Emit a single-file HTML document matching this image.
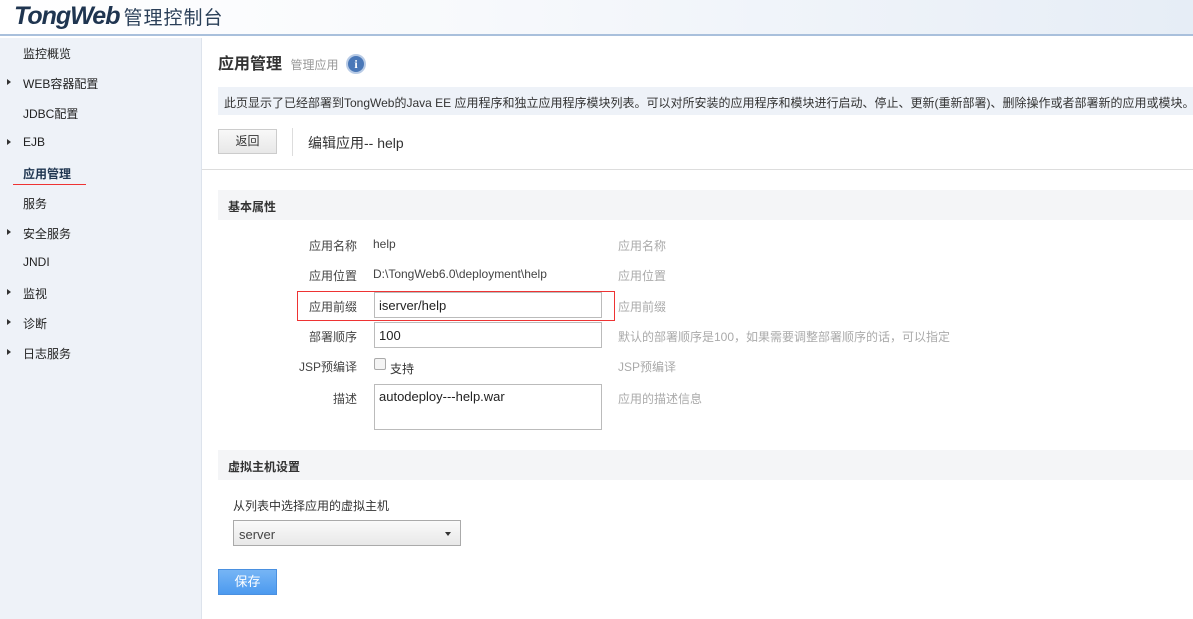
<!DOCTYPE html>
<html><head><meta charset="utf-8"><style>
*{margin:0;padding:0;box-sizing:border-box}
body{width:1193px;height:619px;overflow:hidden;font-family:"Liberation Sans","Noto Sans CJK SC",sans-serif;font-size:12px;color:#333;background:#fff;position:relative}
.hdr{position:absolute;left:0;top:0;width:1193px;height:36px;background:linear-gradient(90deg,#fff 0%,#f7f9fc 40%,#e6edf6 100%);border-bottom:2px solid #a9c0dc}
.logo{position:absolute;left:14px;top:2px;font:italic bold 25px "Liberation Sans",sans-serif;color:#1f3550;letter-spacing:-1px}
.logo span{font:normal 19px "Noto Sans CJK SC",sans-serif;color:#2a3f58;letter-spacing:1px;margin-left:4px}
.side{position:absolute;left:0;top:38px;width:202px;height:581px;background:#eef2f8;border-right:1px solid #dde3ec}
.side div{position:absolute;left:23px;font-size:12px;color:#222}
.side .a:before{content:"";position:absolute;left:-16px;top:4px;border-left:4px solid #333;border-top:3px solid transparent;border-bottom:3px solid transparent}
.abs{position:absolute}
.inp{position:absolute;border:1px solid #bbb;background:#fff;font-size:13px;color:#222;padding:5px 4px}
.lbl{position:absolute;right:836px;font-size:12px;color:#444}
.hint{position:absolute;left:618px;color:#aaa;font-size:12px}
</style></head><body>
<div class="hdr"><div class="logo">TongWeb<span>管理控制台</span></div></div>
<div class="side">
<div style="top:7px">监控概览</div>
<div class="a" style="top:37px">WEB容器配置</div>
<div style="top:67px">JDBC配置</div>
<div class="a" style="top:97px">EJB</div>
<div style="top:127px;font-weight:bold;color:#1f3550">应用管理</div>
<div style="left:13px;top:146px;width:73px;height:1px;background:#e33"></div>
<div style="top:157px">服务</div>
<div class="a" style="top:187px">安全服务</div>
<div style="top:217px">JNDI</div>
<div class="a" style="top:247px">监视</div>
<div class="a" style="top:277px">诊断</div>
<div class="a" style="top:307px">日志服务</div>
</div>
<div class="abs" style="left:218px;top:50px;font-size:16px;font-weight:bold;color:#333">应用管理 <span style="font-size:12px;font-weight:normal;color:#999;margin-left:4px">管理应用</span></div>
<div class="abs" style="left:346px;top:54px;width:20px;height:20px;border-radius:50%;background:#4a78b8;border:2px solid #b8cbe6;color:#fff;font:bold 12px serif;text-align:center;line-height:16px">i</div>
<div class="abs" style="left:218px;top:87px;width:975px;height:28px;background:#eef2f8;padding:7px 6px;font-size:12px;color:#333;white-space:nowrap;overflow:hidden">此页显示了已经部署到TongWeb的Java EE 应用程序和独立应用程序模块列表。可以对所安装的应用程序和模块进行启动、停止、更新(重新部署)、删除操作或者部署新的应用或模块。</div>
<div class="abs" style="left:218px;top:129px;width:59px;height:25px;border:1px solid #ccc;background:linear-gradient(#f8f8f8,#e8e8e8);text-align:center;line-height:23px;color:#333">返回</div>
<div class="abs" style="left:292px;top:128px;width:1px;height:28px;background:#ddd"></div>
<div class="abs" style="left:308px;top:133px;font-size:14px;color:#333">编辑应用-- help</div>
<div class="abs" style="left:202px;top:169px;width:991px;height:1px;background:#ddd"></div>
<div class="abs" style="left:218px;top:190px;width:975px;height:30px;background:#f4f5f7;padding:8px 10px;font-weight:bold;font-size:12px;color:#333">基本属性</div>
<div class="lbl" style="top:237px">应用名称</div><div class="abs" style="left:373px;top:237px;color:#444">help</div><div class="hint" style="top:237px">应用名称</div>
<div class="lbl" style="top:267px">应用位置</div><div class="abs" style="left:373px;top:267px;color:#444">D:\TongWeb6.0\deployment\help</div><div class="hint" style="top:267px">应用位置</div>
<div class="abs" style="left:297px;top:291px;width:318px;height:30px;border:1px solid #e33"></div>
<div class="lbl" style="top:298px">应用前缀</div><div class="inp" style="left:374px;top:292px;width:228px;height:26px">iserver/help</div><div class="hint" style="top:298px">应用前缀</div>
<div class="lbl" style="top:328px">部署顺序</div><div class="inp" style="left:374px;top:322px;width:228px;height:26px">100</div><div class="hint" style="top:328px">默认的部署顺序是100，如果需要调整部署顺序的话，可以指定</div>
<div class="lbl" style="top:358px">JSP预编译</div><div class="abs" style="left:374px;top:358px;width:12px;height:12px;border:1px solid #aaa;border-radius:2px;background:#f4f4f4"></div><div class="abs" style="left:390px;top:360px;color:#333">支持</div><div class="hint" style="top:358px">JSP预编译</div>
<div class="lbl" style="top:390px">描述</div><div class="inp" style="left:374px;top:384px;width:228px;height:46px;padding-top:4px">autodeploy---help.war</div><div class="hint" style="top:390px">应用的描述信息</div>
<div class="abs" style="left:218px;top:450px;width:975px;height:30px;background:#f4f5f7;padding:8px 10px;font-weight:bold;font-size:12px;color:#333">虚拟主机设置</div>
<div class="abs" style="left:233px;top:497px;color:#333">从列表中选择应用的虚拟主机</div>
<div class="abs" style="left:233px;top:520px;width:228px;height:26px;border:1px solid #aaa;background:linear-gradient(#fafafa,#e8e8e8);padding:6px 5px;font-size:13px;color:#444">server<span style="position:absolute;right:9px;top:11px;border-top:4px solid #333;border-left:3px solid transparent;border-right:3px solid transparent"></span></div>
<div class="abs" style="left:218px;top:569px;width:59px;height:26px;background:linear-gradient(#76b5f5,#4c9aef);border:1px solid #4a90e0;color:#fff;text-align:center;line-height:24px;font-size:13px">保存</div>
</body></html>
